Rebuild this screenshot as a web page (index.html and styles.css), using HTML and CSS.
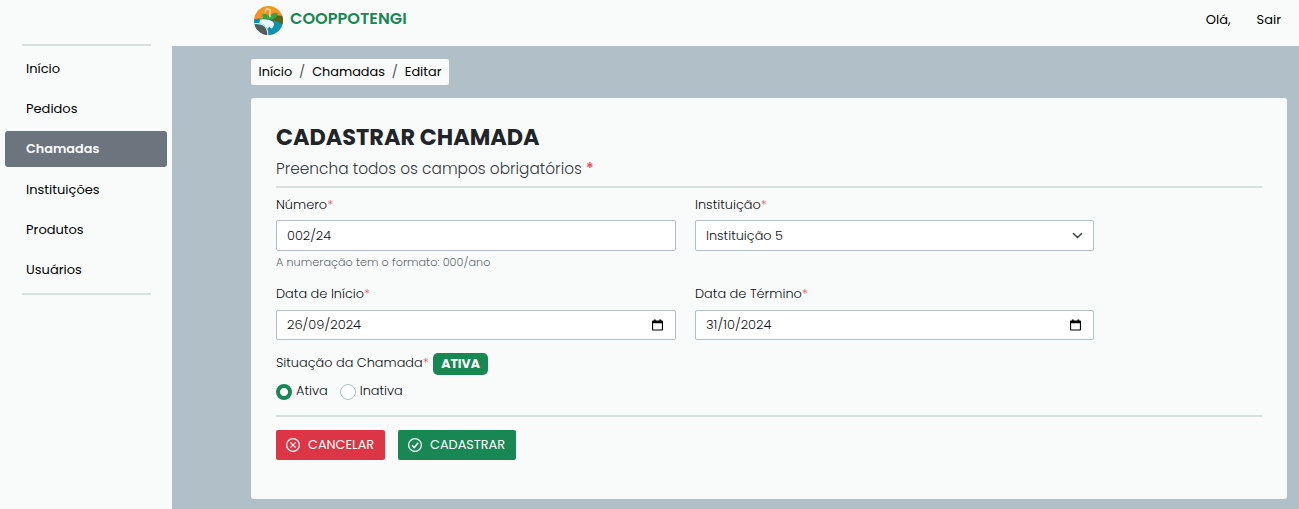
FILE: index.html
```html
<!DOCTYPE html>
<html lang="pt-BR">
<head>
<meta charset="utf-8">
<title>Cooppotengi</title>
<link rel="stylesheet" href="styles.css">
</head>
<body>
<div class="app">
  <aside class="sidebar">
    <nav class="menu">
      <a class="menu-item">Início</a>
      <a class="menu-item">Pedidos</a>
      <a class="menu-item active">Chamadas</a>
      <a class="menu-item">Instituições</a>
      <a class="menu-item">Produtos</a>
      <a class="menu-item">Usuários</a>
    </nav>
  </aside>
  <div class="page">
    <header class="topbar">
      <div class="brand">
        <svg class="logo" viewBox="0 0 30 30">
          <defs><clipPath id="disc"><circle cx="15" cy="15" r="14"/></clipPath></defs>
          <g clip-path="url(#disc)">
            <rect width="30" height="30" fill="#f7941f"/>
            <path d="M0 14Q8 12 14 14L30 16V30H0Z" fill="#0b94b1"/>
            <path d="M9 13Q20 8 30 11V21Q27 16 18 15Z" fill="#58651f"/>
            <path d="M7 14Q15 13 19 16Q22 19 18 23L16 21L14 23Q11 18 6 18Z" fill="#e8f4f5"/>
            <path d="M0 19Q8 18 12 22Q15 26 14 30H0Z" fill="#55595c"/>
            <path d="M0 18Q8 17 12 21Q15 25 14 30" fill="none" stroke="#f4f7f5"/>
          </g>
          <path d="M16 14Q9 15 9 9Q15 8 16.500 12Q18 6 24 8Q23 14 16 14Z" fill="#35a648"/>
          <path d="M12 7Q12 3 15 4Q18 4 16 8L16.500 12" fill="none" stroke="#f5ead8" stroke-width="1.300"/>
        </svg>
        <span class="brand-name">COOPPOTENGI</span>
      </div>
      <div class="session"><span>Olá,</span><a>Sair</a></div>
    </header>
    <main class="content">
      <nav class="breadcrumb"><a>Início</a><span class="slash">/</span><a>Chamadas</a><span class="slash">/</span><a>Editar</a></nav>
      <section class="card">
        <h1 class="title">CADASTRAR CHAMADA</h1>
        <p class="subtitle">Preencha todos os campos obrigatórios <b class="req">*</b></p>
        <form class="form">
          <div class="fields">
            <div class="field">
              <label class="label">Número<span class="req">*</span></label>
              <div class="control">002/24</div>
              <small class="help">A numeração tem o formato: 000/ano</small>
            </div>
            <div class="field">
              <label class="label">Instituição<span class="req">*</span></label>
              <div class="control"><span>Instituição 5</span>
                <svg class="chevron" viewBox="0 0 16 16"><path d="m2 5 6 6 6-6" fill="none" stroke="#343a40" stroke-width="2" stroke-linecap="round" stroke-linejoin="round"/></svg></div>
            </div>
            <div class="field">
              <label class="label date-label">Data de Início<span class="req">*</span></label>
              <div class="control date"><span>26/09/2024</span>
                <svg class="calendar" viewBox="0 0 12 12"><path d="M2 0h2v1h4V0h2v1h1q1 0 1 1v9q0 1-1 1H1q-1 0-1-1V2q0-1 1-1h1zM1.2 4v6.8h9.600V4z" fill="#000" fill-rule="evenodd"/></svg></div>
            </div>
            <div class="field">
              <label class="label date-label">Data de Término<span class="req">*</span></label>
              <div class="control date"><span>31/10/2024</span>
                <svg class="calendar" viewBox="0 0 12 12"><path d="M2 0h2v1h4V0h2v1h1q1 0 1 1v9q0 1-1 1H1q-1 0-1-1V2q0-1 1-1h1zM1.2 4v6.8h9.600V4z" fill="#000" fill-rule="evenodd"/></svg></div>
            </div>
          </div>
          <div class="status">Situação da Chamada<span class="req">*</span><span class="badge">ATIVA</span></div>
          <div class="options">
            <label class="option"><i class="radio checked"></i><span>Ativa</span></label>
            <label class="option"><i class="radio"></i><span>Inativa</span></label>
          </div>
          <div class="actions">
            <a class="btn cancel"><svg class="icon" viewBox="0 0 16 16"><circle cx="8" cy="8" r="7.3"/><path d="m5 5 6 6m0-6-6 6"/></svg><span>CANCELAR</span></a>
            <a class="btn save"><svg class="icon" viewBox="0 0 16 16"><circle cx="8" cy="8" r="7.3"/><path d="m4.600 8.300 2.600 2.600 4.400-5.400" stroke-width="1.7"/></svg><span>CADASTRAR</span></a>
          </div>
        </form>
      </section>
    </main>
  </div>
</div>
</body>
</html>
```
FILE: styles.css
```css
* { box-sizing: border-box; }
body { margin: 0; font-family: Poppins, Inter, sans-serif; font-size: 12.85px; color: #212529; background: #b0bfc8; }
.app { display: flex; height: 509px; overflow: hidden; white-space: nowrap; }
.sidebar { width: 172px; padding: 44px 5px 0; background: #f9fbfa; }
.menu { display: flex; flex-direction: column; gap: 4.2px; padding-top: 7px; position: relative; height: 251px; }
.menu::before, .menu::after { content: ""; position: absolute; left: 17px; width: 129px; height: 2px; background: #d9e1df; }
.menu::before { top: 0; }
.menu::after { bottom: 0; }
.menu-item { height: 36px; line-height: 35px; padding-left: 21px; border-radius: 3px; color: #000; font-size: 13px; }
.menu-item.active { background: #6c757d; color: #f9fbfa; font-weight: 600; font-size: 12.8px; }
.page { flex: 1; display: flex; flex-direction: column; }
.topbar { height: 46px; padding: 0 18px 6px 81px; background: #f9fbfa; display: flex; align-items: center; justify-content: space-between; }
.brand { display: flex; align-items: center; gap: 6px; }
.logo { width: 31px; height: 31px; }
.brand-name { font-size: 16.15px; line-height: 20px; font-weight: 600; color: #198754; padding-bottom: 3px; }
.session { display: flex; gap: 26px; color: #000; font-size: 13px; }
.content { flex: 1; padding: 13px 12px 10px 79px; display: flex; flex-direction: column; align-items: flex-start; gap: 13px; }
.breadcrumb { width: 198px; height: 26px; line-height: 26px; padding: 0 7.5px; border-radius: 2px; background: #f9fbfa; color: #000; display: flex; }
.slash { color: #4c555d; padding: 0 6.9px; }
.card { align-self: stretch; flex: 1; padding: 25px; border-radius: 3px; background: #f9fbfa; }
.title { margin: 0; font-size: 22.4px; line-height: 29px; font-weight: 700; }
.subtitle { margin: 0; height: 36px; line-height: 33px; font-size: 15.35px; font-weight: 300; color: #343a40; border-bottom: 2px solid #d9e1df; }
.req { color: #f8485a; }
.subtitle .req { font-weight: 500; }
.form { font-weight: 300; color: #0c1014; }
.fields { display: grid; grid-template-columns: 400px 399px; grid-template-rows: 90px 75px; column-gap: 19px; }
.field { padding-top: 5px; }
.label { display: block; height: 27px; line-height: 23px; font-size: 12.9px; }
.date-label { line-height: 21px; }
.control { height: 31px; padding: 0 10px; border: 1px solid #b0bfc8; border-radius: 2px; background: #fff; display: flex; align-items: center; justify-content: space-between; }
.control.date { height: 30px; padding-right: 12px; font-size: 13px; }
.chevron { width: 11px; height: 11px; }
.calendar { width: 11px; height: 12px; }
.help { display: block; font-size: 11.2px; letter-spacing: 0.06px; line-height: 22px; color: #5c656d; }
.status { height: 22px; line-height: 20px; display: flex; }
.badge { height: 22px; line-height: 22px; margin-left: 4.4px; width: 55px; text-align: center; border-radius: 5px; background: #198754; color: #fff; font-weight: 700; font-size: 12.5px; }
.options { display: flex; gap: 12px; height: 42px; padding-top: 7px; border-bottom: 2px solid #d9e1df; }
.option { display: flex; gap: 4px; line-height: 18px; font-size: 12.9px; }
.radio { width: 16px; height: 16px; margin-top: 2px; border: 1px solid #b0bfc8; border-radius: 50%; background: #fff; }
.radio.checked { border: 0; background: radial-gradient(circle, #fff 3.6px, #198754 4.4px); }
.actions { display: flex; gap: 13px; padding-top: 13px; }
.btn { height: 30px; padding-left: 10px; display: flex; align-items: center; gap: 8px; border-radius: 2px; color: #fff; font-weight: 400; }
.cancel { width: 109px; background: #dc3545; }
.save { width: 118px; background: #198754; }
.icon { width: 14px; height: 14px; fill: none; stroke: #fff; stroke-width: 1.4; }
```
